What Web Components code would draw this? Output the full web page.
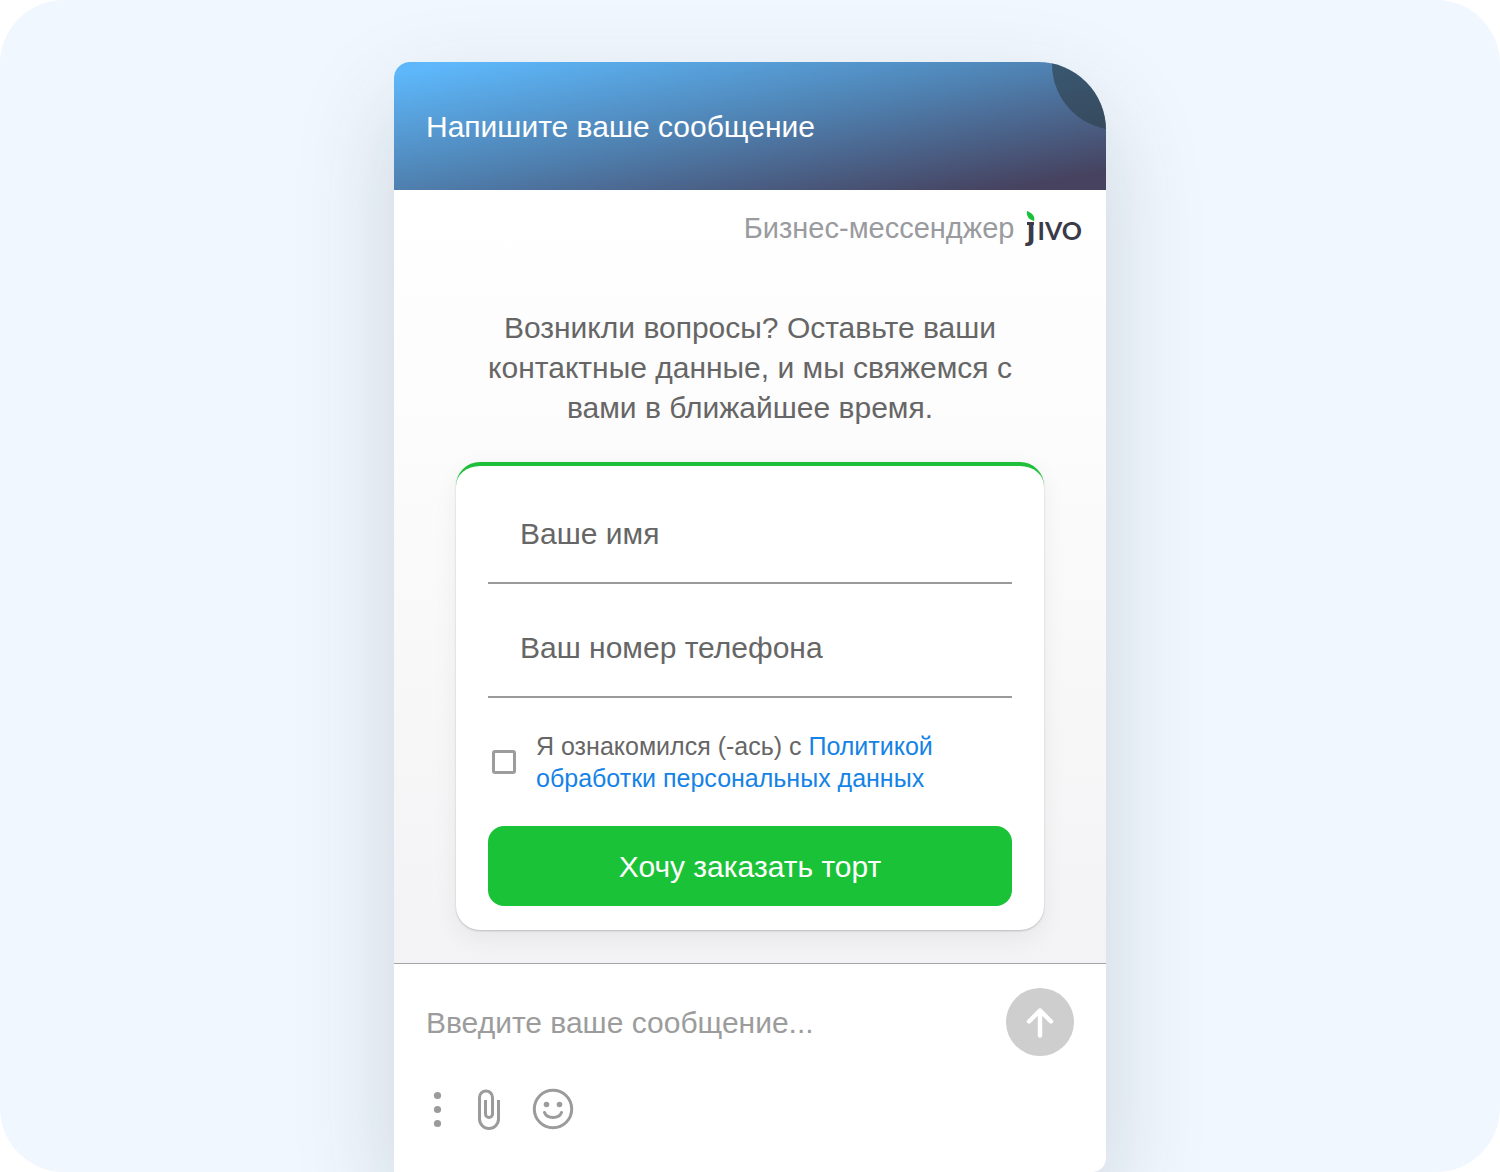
<!DOCTYPE html>
<html lang="ru">
<head>
<meta charset="utf-8">
<meta name="viewport" content="width=device-width, initial-scale=1">
<title>Бизнес-мессенджер Jivo</title>
<style>
  body { margin: 0; background: #fff; font-family: "Liberation Sans", Arial, sans-serif; }
</style>
</head>
<body>
<jivo-stage>
  <jivo-widget>
    <jivo-header slot="header">Напишите ваше сообщение</jivo-header>
    <jivo-brand>Бизнес-мессенджер</jivo-brand>
    <jivo-intro>Возникли вопросы? Оставьте ваши контактные данные, и мы свяжемся с вами в ближайшее время.</jivo-intro>
    <jivo-contact-form>
      <jivo-field label="Ваше имя" type="text"></jivo-field>
      <jivo-field label="Ваш номер телефона" type="tel"></jivo-field>
      <jivo-consent slot="consent"></jivo-consent>
      <span slot="submit">Хочу заказать торт</span>
    </jivo-contact-form>
    <jivo-composer slot="footer" placeholder="Введите ваше сообщение..."></jivo-composer>
  </jivo-widget>
</jivo-stage>

<script>
  const define = (name, html, setup) => {
    const template = document.createElement("template");
    template.innerHTML = "<style>*{box-sizing:border-box}:host{box-sizing:border-box}button,input{font:inherit;margin:0}</style>" + html;
    customElements.define(name, class extends HTMLElement {
      constructor() {
        super();
        this.attachShadow({ mode: "open" }).append(template.content.cloneNode(true));
      }
      connectedCallback() {
        if (setup) setup(this, this.shadowRoot);
      }
    });
  };

  define("jivo-stage", `
    <style>
      :host { display: flex; justify-content: center; min-height: 100vh; padding: 62px 24px 0;
        border-radius: 64px; background: #f1f7ff; overflow: hidden; }
    </style>
    <slot></slot>`);

  define("jivo-widget", `
    <style>
      :host { display: flex; flex-direction: column; flex: 0 1 712px; min-width: 0;
        border-radius: 16px 68px 14px 0; background: #fff;
        box-shadow: 0 40px 100px rgba(30, 55, 50, .18); }
      main { display: flex; flex-direction: column; padding: 20px 24px 33px;
        border-bottom: 1px solid #a3a4a6; background: linear-gradient(#fff, #fcfcfc 30%, #f3f3f5); }
    </style>
    <slot name="header"></slot>
    <main><slot></slot></main>
    <slot name="footer"></slot>`);

  define("jivo-header", `
    <style>
      :host { display: block; }
      header { position: relative; display: flex; align-items: center; min-height: 128px; padding: 2px 32px 0;
        border-radius: 16px 68px 0 0; overflow: hidden; color: #fff;
        background: linear-gradient(to bottom right, #5db7fa 5%, #4f82b2 48%, #46425f 93%); }
      h1 { margin: 0; font-size: 30px; font-weight: 400; line-height: 40px; }
      button { position: absolute; top: -64px; right: -78px; width: 132px; height: 132px; padding: 0;
        border: 0; border-radius: 50%; background: rgba(45, 65, 78, .66); cursor: pointer; }
    </style>
    <header>
      <h1><slot></slot></h1>
      <button type="button" aria-label="Закрыть"></button>
    </header>`);

  define("jivo-brand", `
    <style>
      :host { display: flex; justify-content: flex-end; align-items: center; gap: 12px;
        height: 36px; color: #999b9f; font-size: 29px; line-height: 36px; }
      .logo { position: relative; display: flex; align-items: baseline; gap: 2px; padding-bottom: 4px;
        color: #3a3a48; text-decoration: none;
        font-family: Lato, sans-serif; font-size: 36px; font-weight: 700; line-height: 36px; }
      .j { clip-path: inset(14px -4px -8px -4px); }
      .ivo { font-variant-caps: small-caps; }
      svg { position: absolute; left: 0; top: 3px; }
    </style>
    <span><slot></slot></span>
    <a class="logo" href="#jivo"><span class="j">j</span><span class="ivo">ivo</span><svg width="10" height="16" viewBox="0 0 10 16" aria-hidden="true"><path d="M1 0C6 2 9.500 5 8 10C4 9 0 6 1 0Z" fill="#19c038"/><path d="M1 11H8V14H1Z" fill="#3a3a48"/></svg></a>`);

  define("jivo-intro", `
    <style>
      :host { display: block; width: 100%; max-width: 556px; margin: 62px auto 34px; color: #666;
        font-size: 30px; line-height: 40px; text-align: center; }
      p { margin: 0; }
    </style>
    <p><slot></slot></p>`);

  define("jivo-contact-form", `
    <style>
      :host { display: block; width: 100%; max-width: 588px; margin: 0 auto; }
      form { display: flex; flex-direction: column; gap: 32px; padding: 20px 32px 24px;
        border-top: 4px solid #1dbf3b; border-radius: 24px; background: #fff;
        box-shadow: 0 1px 2px rgba(0, 0, 0, .2), 0 8px 24px rgba(0, 0, 0, .06); }
      .fields { display: flex; flex-direction: column; gap: 16px; }
      button { min-height: 80px; padding: 2px 24px 0; border: 0; border-radius: 16px; color: #fff;
        background: #1ac237; font-size: 30px; line-height: 40px; cursor: pointer; }
    </style>
    <form>
      <div class="fields"><slot></slot></div>
      <slot name="consent"></slot>
      <button type="submit"><slot name="submit"></slot></button>
    </form>`);

  define("jivo-field", `
    <style>
      :host { display: block; }
      input { display: block; width: 100%; height: 98px; padding: 0 32px; border: 0; border-bottom: 2px solid #9a9a9c;
        outline: 0; background: none; color: #333; font-size: 30px; line-height: 40px; }
      input::placeholder { color: #666; opacity: 1; }
    </style>
    <input>`, (host, root) => {
      const input = root.querySelector("input");
      input.type = host.getAttribute("type");
      input.placeholder = host.getAttribute("label");
      input.setAttribute("aria-label", host.getAttribute("label"));
    });

  define("jivo-consent", `
    <style>
      :host { display: flex; align-items: center; gap: 20px; padding-left: 4px; color: #666;
        font-size: 25px; line-height: 32px; }
      input { appearance: none; flex: none; width: 24px; height: 24px; border: 3px solid #9c9c9c; border-radius: 3px; }
      input:checked { background: #1ac237; }
      label { max-width: 420px; }
      a { color: #1583e6; text-decoration: none; }
    </style>
    <input type="checkbox" id="agree">
    <label for="agree">Я ознакомился (-ась) с <a href="#policy">Политикой обработки персональных данных</a></label>`);

  define("jivo-composer", `
    <style>
      :host { display: flex; flex-direction: column; gap: 32px; padding: 24px 32px 40px; }
      .row { display: flex; align-items: center; gap: 24px; }
      input { flex: 1; min-width: 0; height: 68px; padding: 2px 0 0; border: 0; outline: 0; background: none;
        color: #333; font-size: 30px; line-height: 40px; }
      input::placeholder { color: #9c9c9c; opacity: 1; }
      button { display: flex; align-items: center; justify-content: center; padding: 0; border: 0;
        background: none; color: #9b9b9b; cursor: pointer; }
      .send { flex: none; width: 68px; height: 68px; border-radius: 50%; background: #cecece; color: #fff; }
      .tools { display: flex; align-items: center; gap: 30px; padding-left: 6px; }
      svg { display: block; fill: none; stroke: currentColor; stroke-linecap: round; stroke-linejoin: round; }
      .solid { fill: currentColor; stroke: none; }
    </style>
    <div class="row">
      <input type="text">
      <button class="send" type="button" aria-label="Отправить">
        <svg width="32" height="32" viewBox="0 0 32 32" stroke-width="4.400"><path d="M16 29.500V4.500M5 15.500L16 4.500L27 15.500"/></svg>
      </button>
    </div>
    <div class="tools">
      <button type="button" aria-label="Меню">
        <svg width="14" height="42" viewBox="0 0 14 42"><g class="solid"><circle cx="5.500" cy="7.500" r="3.600"/><circle cx="5.500" cy="21.500" r="3.600"/><circle cx="5.500" cy="35.500" r="3.600"/></g></svg>
      </button>
      <button type="button" aria-label="Прикрепить файл">
        <svg width="26" height="42" viewBox="0 0 26 42" stroke-width="3" style="stroke-linecap:butt"><path d="M22.500 12V31a9.500 9.500 0 0 1-19 0V9.500a6.500 6.500 0 0 1 13 0V26a3.500 3.500 0 0 1-7 0V12"/></svg>
      </button>
      <button type="button" aria-label="Смайлы">
        <svg width="42" height="42" viewBox="0 0 42 42" stroke-width="3"><circle cx="21" cy="21" r="18.700"/><path d="M12.500 24.500C15 31 27 31 29.500 24.500"/><g class="solid"><circle cx="14.500" cy="16.500" r="2.800"/><circle cx="27.500" cy="16.500" r="2.800"/></g></svg>
      </button>
    </div>`, (host, root) => {
      const input = root.querySelector("input");
      input.placeholder = host.getAttribute("placeholder");
      input.setAttribute("aria-label", host.getAttribute("placeholder"));
    });
</script>
</body>
</html>
